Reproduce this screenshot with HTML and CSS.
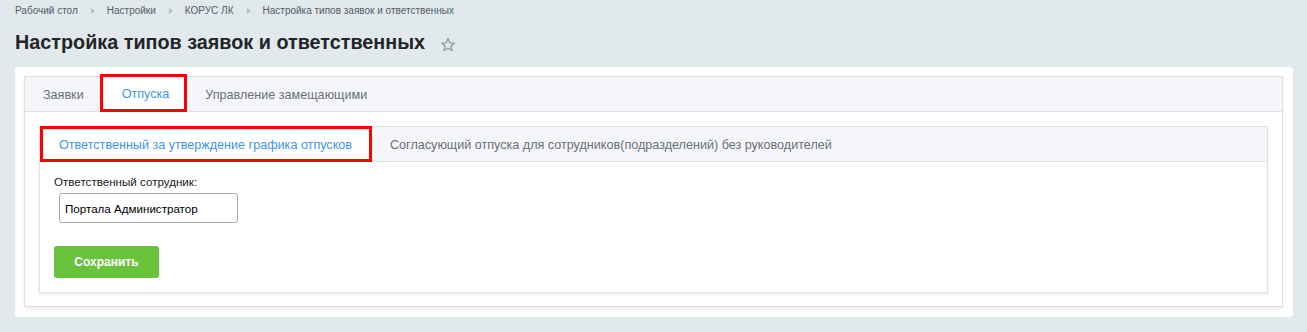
FILE: index.html
```html
<!DOCTYPE html>
<html lang="ru">
<head>
    <meta charset="UTF-8">
    <title>Настройка типов заявок и ответственных</title>
    <link rel="stylesheet" href="styles.css">
</head>
<body>
    <div class="breadcrumbs">
        <a href="#">Рабочий стол</a>
        <span class="sep"></span>
        <a href="#">Настройки</a>
        <span class="sep"></span>
        <a href="#">КОРУС ЛК</a>
        <span class="sep"></span>
        <a href="#">Настройка типов заявок и ответственных</a>
    </div>
    <div class="title-row">
        <h1>Настройка типов заявок и ответственных</h1>
        <svg class="star" width="16" height="16" viewBox="0 0 16 16">
            <path d="M8 1.6l1.9 4.1 4.5.5-3.4 3 1 4.4L8 11.3l-3.9 2.3 1-4.4-3.4-3 4.5-.5z" fill="none" stroke="#a0a6ad" stroke-width="1.6" stroke-linejoin="round"/>
        </svg>
    </div>
    <div class="card">
        <div class="panel outer">
            <div class="tabs">
                <div class="tab">Заявки</div>
                <div class="tab active">Отпуска</div>
                <div class="tab">Управление замещающими</div>
            </div>
            <div class="panel-body">
                <div class="panel inner">
                    <div class="tabs">
                        <div class="tab active">Ответственный за утверждение графика отпусков</div>
                        <div class="tab">Согласующий отпуска для сотрудников(подразделений) без руководителей</div>
                    </div>
                    <div class="form">
                        <label for="emp">Ответственный сотрудник:</label>
                        <input id="emp" type="text" value="Портала Администратор">
                        <button>Сохранить</button>
                    </div>
                </div>
            </div>
        </div>
    </div>
</body>
</html>
```

FILE: styles.css
```css
body {
    margin: 0;
    padding: 0 14px 0 15px;
    background: #e1e9ec;
    font-family: 'Liberation Sans', Arial, sans-serif;
    color: #333;
}
.breadcrumbs {
    display: flex;
    align-items: center;
    height: 21px;
    font-size: 10px;
}
.breadcrumbs a {
    color: #535c69;
    text-decoration: none;
}
.sep {
    width: 0;
    height: 0;
    margin: 0 12px 0 13px;
    border-left: 4px solid #b7bdc4;
    border-top: 3px solid transparent;
    border-bottom: 3px solid transparent;
}
.title-row {
    display: flex;
    align-items: center;
    height: 43px;
    padding-bottom: 3px;
}
h1 {
    margin: 0;
    font-size: 19.8px;
    font-weight: bold;
    color: #232526;
}
.star {
    margin-left: 15px;
    margin-top: 4px;
}
.card {
    background: #fff;
    border-radius: 4px;
    padding: 9px 10px 10px 9px;
}
.panel {
    background: #fff;
    border: 1px solid #dfe0e6;
    box-shadow: 0 2px 3px rgba(0, 0, 0, 0.08);
}
.tabs {
    display: flex;
    height: 34px;
    background: #f5f6fa;
    border-bottom: 1px solid #dfe0e6;
    font-size: 12.6px;
}
.tab {
    display: flex;
    align-items: center;
    padding: 2px 16px 0 18px;
    color: #6a6f75;
}
.tab.active {
    color: #3f96e8;
    background: #fff;
    border: 3px solid #ff0000;
    margin-top: -3px;
    margin-bottom: -1px;
    padding: 2px 15px 0 19px;
}
.panel-body {
    padding: 14px 14px 13px 14px;
}
.inner .tab.active {
    margin-top: -1px;
    padding: 2px 17px 0 16px;
}
.inner .tab {
    padding-left: 18px;
}
.form {
    display: flex;
    flex-direction: column;
    align-items: flex-start;
    padding: 13px 14px 14px 14px;
}
label {
    font-size: 11.6px;
    color: #1a1a1a;
    margin-bottom: 5px;
}
input {
    box-sizing: border-box;
    width: 179px;
    height: 30px;
    margin-left: 5px;
    padding: 0 5px;
    border: 1px solid #a8adb4;
    border-radius: 3px;
    font-family: 'Liberation Sans', Arial, sans-serif;
    font-size: 11.6px;
    color: #000;
}
button {
    margin-top: 23px;
    width: 105px;
    height: 32px;
    border: none;
    border-radius: 3px;
    background: #68c23c;
    color: #fff;
    font-family: 'Liberation Sans', Arial, sans-serif;
    font-size: 12px;
    font-weight: bold;
    cursor: pointer;
}
```
